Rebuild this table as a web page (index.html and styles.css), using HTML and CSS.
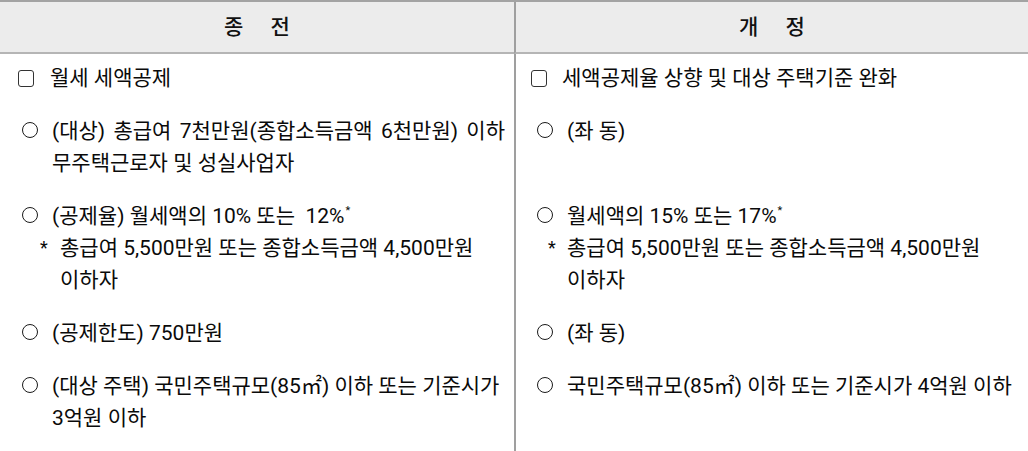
FILE: index.html
```html
<!DOCTYPE html>
<html lang="ko">
<head>
<meta charset="utf-8">
<link rel="stylesheet" href="styles.css">
</head>
<body>
<div class="table">
  <div class="head left">종 전</div>
  <div class="head right">개 정</div>

  <div class="cell left first">
    <div class="item box-l"><span class="mark"><span class="box"></span></span><span class="txt">월세 세액공제</span></div>
  </div>
  <div class="cell right first">
    <div class="item box-r"><span class="mark"><span class="box"></span></span><span class="txt">세액공제율 상향 및 대상 주택기준 완화</span></div>
  </div>

  <div class="cell left">
    <div class="item"><span class="mark"><span class="circ"></span></span><span class="txt justify">(대상) 총급여 7천만원(종합소득금액 6천만원) 이하 무주택근로자 및 성실사업자</span></div>
  </div>
  <div class="cell right">
    <div class="item"><span class="mark"><span class="circ"></span></span><span class="txt">(좌 동)</span></div>
  </div>

  <div class="cell left">
    <div class="item"><span class="mark"><span class="circ"></span></span><span class="txt">(공제율) 월세액의 10% 또는 &nbsp;12%<sup>*</sup></span></div>
    <div class="item note-l"><span class="mark star">*</span><span class="txt">총급여 5,500만원 또는 종합소득금액 4,500만원 이하자</span></div>
  </div>
  <div class="cell right">
    <div class="item"><span class="mark"><span class="circ"></span></span><span class="txt">월세액의 15% 또는 17%<sup>*</sup></span></div>
    <div class="item note-r"><span class="mark star">*</span><span class="txt">총급여 5,500만원 또는 종합소득금액 4,500만원 이하자</span></div>
  </div>

  <div class="cell left">
    <div class="item"><span class="mark"><span class="circ"></span></span><span class="txt">(공제한도) 750만원</span></div>
  </div>
  <div class="cell right">
    <div class="item"><span class="mark"><span class="circ"></span></span><span class="txt">(좌 동)</span></div>
  </div>

  <div class="cell left last">
    <div class="item"><span class="mark"><span class="circ"></span></span><span class="txt">(대상 주택) 국민주택규모(85㎡) 이하 또는 기준시가 3억원 이하</span></div>
  </div>
  <div class="cell right last">
    <div class="item"><span class="mark"><span class="circ"></span></span><span class="txt">국민주택규모(85㎡) 이하 또는 기준시가 4억원 이하</span></div>
  </div>
</div>
</body>
</html>
```

FILE: styles.css
```css
html, body {
  margin: 0;
  padding: 0;
  background: #ffffff;
}
body {
  font-family: Roboto, "Noto Sans CJK KR", "Noto Sans", sans-serif;
  font-size: 21px;
  color: #0a0a0a;
  width: 1028px;
  height: 451px;
  overflow: hidden;
  word-break: keep-all;
}
.table {
  display: grid;
  grid-template-columns: 514px 1fr;
  border-top: 2px solid #a3a3a3;
}
.head {
  height: 50px;
  line-height: 50px;
  background: #ececec;
  border-bottom: 2px solid #b5b5b5;
  text-align: center;
  font-size: 21px;
  font-weight: 500;
  word-spacing: 22px;
  color: #111;
}
.right {
  border-left: 2px solid #9f9f9f;
}
.cell {
  padding-top: 21px;
}
.cell.first {
  padding-top: 8px;
}
.cell.last {
  padding-bottom: 20px;
}
.cell.left {
  padding-left: 22px;
  padding-right: 9px;
}
.cell.right {
  padding-left: 21px;
  padding-right: 9px;
}
.item {
  display: flex;
  line-height: 32px;
}
.mark {
  flex: none;
  width: 30px;
  height: 32px;
  display: flex;
  align-items: center;
}
.txt {
  flex: 1;
  min-width: 0;
}
.justify {
  text-align: justify;
}
.box {
  display: block;
  width: 14px;
  height: 15px;
  border: 1.5px solid #333;
  border-radius: 3px;
}
.box-l {
  margin-left: -4px;
}
.box-l .mark {
  width: 32px;
}
.box-r {
  margin-left: -6px;
}
.box-r .mark {
  width: 31px;
}
.circ {
  display: block;
  width: 14px;
  height: 14px;
  border: 1.4px solid #1a1a1a;
  border-radius: 50%;
  margin-top: -3px;
}
.star {
  font-size: 18px;
  align-items: flex-start;
  line-height: 32px;
}
.note-l {
  margin-left: 18px;
}
.note-l .mark {
  width: 20px;
}
.note-r {
  margin-left: 11px;
}
.note-r .mark {
  width: 19px;
}
sup {
  font-size: 11px;
  line-height: 0;
  vertical-align: 9px;
  margin-left: 1px;
}
```
